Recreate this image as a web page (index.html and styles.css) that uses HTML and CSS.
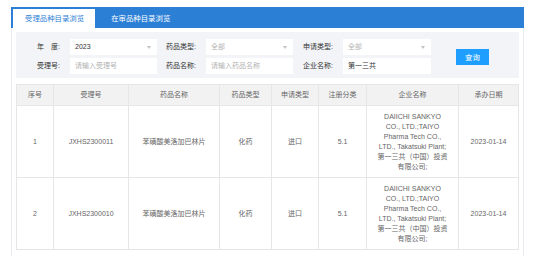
FILE: index.html
```html
<!DOCTYPE html>
<html lang="zh-CN">
<head>
    <meta charset="UTF-8">
    <meta name="viewport" content="width=device-width, initial-scale=1.0">
    <title>品种目录浏览</title>
    <link rel="stylesheet" href="styles.css">
</head>
<body>

<div class="panel">
    <div class="tabs">
        <div class="tab active">受理品种目录浏览</div>
        <div class="tab">在审品种目录浏览</div>
    </div>

    <div class="panel-body">
        <!-- search form -->
        <form class="search">
            <label class="lbl">年&emsp;度:</label>
            <div class="select"><span class="val">2023</span></div>
            <label class="lbl">药品类型:</label>
            <div class="select"><span class="ph">全部</span></div>
            <label class="lbl">申请类型:</label>
            <div class="select"><span class="ph">全部</span></div>
            <div class="btn-cell"><button type="button" class="search-btn">查询</button></div>

            <label class="lbl">受理号:</label>
            <input type="text" class="field" placeholder="请输入受理号">
            <label class="lbl">药品名称:</label>
            <input type="text" class="field" placeholder="请输入药品名称">
            <label class="lbl">企业名称:</label>
            <input type="text" class="field" value="第一三共">
        </form>

        <table class="list">
            <colgroup>
                <col class="c-no">
                <col class="c-acc">
                <col class="c-name">
                <col class="c-type">
                <col class="c-app">
                <col class="c-reg">
                <col class="c-corp">
                <col class="c-date">
            </colgroup>
            <thead>
                <tr>
                    <th>序号</th>
                    <th>受理号</th>
                    <th>药品名称</th>
                    <th>药品类型</th>
                    <th>申请类型</th>
                    <th>注册分类</th>
                    <th>企业名称</th>
                    <th>承办日期</th>
                </tr>
            </thead>
            <tbody id="rows"></tbody>
        </table>
    </div>
</div>

<script>
    let rows = [
        { no: 1, acc: "JXHS2300011" },
        { no: 2, acc: "JXHS2300010" }
    ];
    let tbody = document.getElementById("rows");
    rows.forEach(r => {
        let tr = document.createElement("tr");
        tr.innerHTML = `
            <td>${r.no}</td>
            <td>${r.acc}</td>
            <td>苯磺酸美洛加巴林片</td>
            <td>化药</td>
            <td>进口</td>
            <td>5.1</td>
            <td>DAIICHI SANKYO CO., LTD.;TAIYO Pharma Tech CO., LTD., Takatsuki Plant;第一三共（中国）投资有限公司;</td>
            <td>2023-01-14</td>
        `;
        tbody.appendChild(tr);
    });
</script>

</body>
</html>
```

FILE: styles.css
```css
body {
    margin: 0;
    background: #ffffff;
    font-family: "Liberation Sans", "Noto Sans CJK SC", sans-serif;
    font-size: 7px;
    color: #666;
}
.panel {
    width: 513px;
    margin: 7px 0 0 11px;
    box-sizing: border-box;
    border-left: 1px solid #e8ebf0;
    border-right: 1px solid #e8ebf0;
    min-height: 250px;
}

/* tabs */
.tabs {
    display: flex;
    height: 21px;
    box-sizing: border-box;
    padding: 2px 0 0 2px;
    margin: 0 -1px;
    background: #2b80d6;
}
.tab {
    padding: 0 11px 0 12px;
    line-height: 19px;
    font-size: 7.4px;
    color: #ffffff;
}
.tab.active {
    background: #ffffff;
    color: #2b80d6;
    margin-right: 4px;
}

.panel-body {
    padding: 4px 4px 0 4px;
}

/* search form */
.search {
    display: grid;
    grid-template-columns: 54px 87px 49px 87px 50px 88px 1fr;
    grid-template-rows: 16px 16px;
    row-gap: 3px;
    padding: 7px 0 4px 0;
    background: #f2f4f7;
    margin: 0;
}
.lbl {
    text-align: right;
    padding-right: 10px;
    line-height: 16px;
    color: #333;
}
.select, .field {
    background: #ffffff;
    border: none;
    box-sizing: border-box;
    height: 16px;
    padding: 0 0 0 5px;
    font: inherit;
    color: #333;
    line-height: 16px;
    position: relative;
    outline: none;
}
.select::after {
    content: "";
    position: absolute;
    right: 6px;
    top: 7px;
    border-left: 2.5px solid transparent;
    border-right: 2.5px solid transparent;
    border-top: 3px solid #c2c2c2;
}
.select .ph, .field::placeholder {
    color: #b3b3b3;
}
.btn-cell {
    grid-column: 7;
    grid-row: 1 / span 2;
    display: flex;
    align-items: center;
    padding-left: 25px;
}
.search-btn {
    width: 33px;
    height: 16px;
    border: none;
    padding: 0;
    background: #1e9fff;
    color: #ffffff;
    font: inherit;
    font-size: 7.4px;
    cursor: pointer;
}

/* table */
.list {
    width: 502px;
    margin-top: 6px;
    border-collapse: collapse;
    table-layout: fixed;
}
.c-no { width: 37px; }
.c-acc { width: 75px; }
.c-name { width: 91px; }
.c-type { width: 52px; }
.c-app { width: 47px; }
.c-reg { width: 48px; }
.c-corp { width: 92px; }
.c-date { width: 60px; }
.list th, .list td {
    border: 1px solid #e6e6e6;
    text-align: center;
    line-height: 10px;
    font-weight: normal;
    color: #666;
}
.list th {
    background: #f2f2f2;
    padding: 5px 0;
}
.list td {
    padding: 6px 10px 5px;
}
```
